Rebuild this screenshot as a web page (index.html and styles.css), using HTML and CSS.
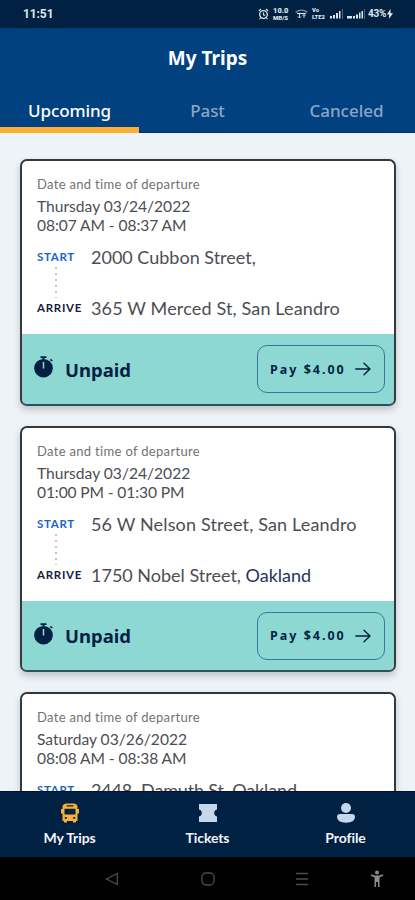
FILE: index.html
```html
<!DOCTYPE html>
<html lang="en">
<head>
<meta charset="utf-8">
<title>My Trips</title>
<link rel="stylesheet" href="styles.css">
</head>
<body>
<svg width="0" height="0" class="defs">
  <symbol id="stopwatch" viewBox="0 0 20 22">
    <path d="M6.5 0.3h6v1.600h-6zM8.500 1.500h2v2h-2z"/>
    <path d="M16.800 2.800l2 1.600-1 1.200-2-1.600z"/>
    <circle cx="9.5" cy="12.2" r="9.3"/>
    <path d="M9.500 6.500v5.500" stroke="#8ed8d4" stroke-width="1.500" stroke-linecap="round"/>
  </symbol>
  <symbol id="arrow" viewBox="0 0 16 14">
    <path d="M0.8 7h14M9 1.2L15 7l-6 5.8" fill="none" stroke="currentColor" stroke-width="1.4" stroke-linecap="round" stroke-linejoin="round"/>
  </symbol>
</svg>
<div class="app">
  <div class="status">
    <span class="clock">11:51</span>
    <div class="indicators">
      <svg class="alarm" viewBox="0 0 11 12" width="11" height="12"><circle cx="5.5" cy="6.5" r="3.8" fill="none" stroke="#dfe5ec" stroke-width="1.3"/><path d="M.8 3L3 1M10.2 3L8 1M5.5 4.5v2.3l1.5.8M2.5 10L1.5 11.2M8.5 10l1 1.2" fill="none" stroke="#dfe5ec" stroke-width="1.1"/></svg>
      <span class="speed"><b>10.0</b><b>MB/S</b></span>
      <svg class="wifi" viewBox="0 0 13 10" width="13" height="10"><path d="M.5 3.2Q6.5-1 12.500 3.200" fill="none" stroke="#7f91a8" stroke-width="1.300"/><path d="M2 4.500h9" stroke="#dfe5ec" stroke-width="1.200"/><path d="M4.500 5v4M3 7.500l1.500 1.500L6 7.500M9 9V5.500M7.500 7L9 5.500 10.500 7" fill="none" stroke="#c4ced9"/></svg>
      <span class="volte"><b>Vo</b><b>LTE2</b></span>
      <svg class="sig" viewBox="0 0 13 10" width="13" height="10"><path d="M0 7h2v2.500H0zM3 6h2v3.500H3zM6 4h2v5.500H6zM9 2h1.500v7.500H9z" fill="#dfe5ec"/><path d="M12.500 0v10" stroke="#4f6682"/></svg>
      <svg class="sig2" viewBox="0 0 18 10" width="18" height="10"><path d="M0 7h5v2.500H0zM6 7h2v2.500H6zM9 5.500h2v4H9zM12 3.500h1.500v6H12zM14.500 2H16v7.500h-1.500z" fill="#dfe5ec"/><path d="M17.500 0v10" stroke="#4f6682"/></svg>
      <span class="battery">43%</span>
      <svg class="bolt" viewBox="0 0 6 10" width="6" height="10"><path d="M3.500 0L0 5.500h2.300L1.800 10 6 4.200H3.500z" fill="#e8edf2"/></svg>
    </div>
  </div>
  <header>
    <h1>My Trips</h1>
    <nav class="tabs">
      <a class="tab active">Upcoming</a>
      <a class="tab">Past</a>
      <a class="tab canceled">Canceled</a>
    </nav>
  </header>
  <main>
    <article class="card">
      <div class="info">
        <p class="label">Date and time of departure</p>
        <p class="date">Thursday 03/24/2022</p>
        <p class="date time">08:07 AM - 08:37 AM</p>
        <div class="route">
          <span class="start">START</span><span class="place">2000 Cubbon Street,</span>
          <i class="dots"></i>
          <span class="arrive">ARRIVE</span><span class="place wide">365 W Merced St, San Leandro</span>
        </div>
      </div>
      <div class="pay">
        <svg class="watch"><use href="#stopwatch"/></svg>
        <span class="unpaid">Unpaid</span>
        <button>Pay $4.00<svg class="arr"><use href="#arrow"/></svg></button>
      </div>
    </article>
    <article class="card">
      <div class="info">
        <p class="label">Date and time of departure</p>
        <p class="date">Thursday 03/24/2022</p>
        <p class="date time pm">01:00 PM - 01:30 PM</p>
        <div class="route">
          <span class="start">START</span><span class="place wide">56 W Nelson Street, San Leandro</span>
          <i class="dots"></i>
          <span class="arrive">ARRIVE</span><span class="place">1750 Nobel Street, <em>Oakland</em></span>
        </div>
      </div>
      <div class="pay">
        <svg class="watch"><use href="#stopwatch"/></svg>
        <span class="unpaid">Unpaid</span>
        <button>Pay $4.00<svg class="arr"><use href="#arrow"/></svg></button>
      </div>
    </article>
    <article class="card">
      <div class="info">
        <p class="label">Date and time of departure</p>
        <p class="date">Saturday 03/26/2022</p>
        <p class="date time">08:08 AM - 08:38 AM</p>
        <div class="route">
          <span class="start">START</span><span class="place tight">2448&nbsp; Damuth St, Oakland</span>
          <i class="dots"></i>
        </div>
      </div>
    </article>
  </main>
  <nav class="bottom">
    <a>
      <svg viewBox="0 0 18 20" width="18" height="20"><path fill="#f7b03b" fill-rule="evenodd" d="M5 .5h8Q16.500 1 16.500 4v2H18v4.500h-1.500V18H15v1.500h-3V18H6v1.500H3V18H1.500v-7.500H0V6h1.500V4Q1.500 1 5 .5zM5.500 2.300v1.200h7V2.300zM3.500 5.800v5.700h11V5.800zM3.800 14v1.800h2V14zM12.200 14v1.800h2V14z"/></svg>
      <span>My Trips</span>
    </a>
    <a>
      <svg viewBox="0 0 20 20" width="20" height="20"><path fill="#c5d7ed" d="M1 1h18v5.500q-2.800.7-2.800 3.500t2.800 3.500V19H1v-5.500q2.800-.7 2.800-3.500T1 6.500z"/></svg>
      <span>Tickets</span>
    </a>
    <a>
      <svg viewBox="0 0 18 20" width="18" height="20"><circle cx="9" cy="5" r="5" fill="#c5d7ed"/><path fill="#c5d7ed" d="M3 11h12q3 0 3 3 0 5.700-9 5.700T0 14q0-3 3-3z"/></svg>
      <span>Profile</span>
    </a>
  </nav>
  <div class="system">
    <svg viewBox="0 0 14 14" width="14" height="14"><path d="M12.300 1.500v11L1.500 7z" fill="none" stroke="#4c4c4c" stroke-width="1.300"/></svg>
    <svg viewBox="0 0 14 14" width="14" height="14"><rect x="1" y="1" width="12" height="12" rx="4" fill="none" stroke="#4c4c4c" stroke-width="1.300"/></svg>
    <svg viewBox="0 0 14 14" width="14" height="14"><path d="M1 1.500h12M1 7h12M1 12.500h12" stroke="#4c4c4c" stroke-width="1.500"/></svg>
    <svg viewBox="0 0 14 18" width="14" height="18"><circle cx="7" cy="2.500" r="2" fill="#8a8a8a"/><path d="M1 5l4 1.500h4L13 5M7 6v5" fill="none" stroke="#8a8a8a" stroke-width="1.800"/><path d="M4.500 6h5v11H8v-5H6v5H4.500z" fill="#8a8a8a"/></svg>
  </div>
</div>
</body>
</html>
```

FILE: styles.css
```css
* { box-sizing: border-box; margin: 0; padding: 0; }
body { font-family: Lato, "Liberation Sans", sans-serif; background: #eef3f7; font-variant-ligatures: none; }
.defs { display: block; height: 0; }
.app { width: 415px; height: 900px; display: flex; flex-direction: column; overflow: hidden; }
svg { flex: none; }

.status { height: 28px; flex: none; background: #002142; color: #dfe5ec; display: flex; justify-content: space-between; align-items: center; padding: 0 22px 0 23px; }
.clock { font: 700 12px Roboto, sans-serif; letter-spacing: -0.1px; }
.indicators { display: flex; align-items: center; }
.speed, .volte { display: flex; flex-direction: column; font: 700 6px/7px Roboto, sans-serif; white-space: nowrap; }
.speed { width: 16px; margin-left: 4px; }
.speed b:first-child { font-size: 7.500px; }
.wifi { margin-left: 6px; }
.volte { width: 14px; margin-left: 4px; font-size: 5.800px; }
.sig { margin-left: 4px; }
.sig2 { margin-left: 4px; }
.battery { font: 700 10px/12px Roboto, sans-serif; letter-spacing: -0.300px; margin-left: 3px; }
.bolt { margin-left: 1px; }

header { height: 105px; flex: none; background: #01417f; display: flex; flex-direction: column; }
h1 { font: 700 19px/60px "Noto Sans", sans-serif; color: #fff; text-align: center; }
.tabs { display: grid; grid-template-columns: 139px 137px 139px; height: 45px; }
.tab { font: 500 17px/46px "Noto Sans", sans-serif; letter-spacing: -0.100px; text-align: center; color: #8ba6c6; border-bottom: 1px solid #01306f; height: 45px; }
.tab.active { color: #fff; border-bottom: 6px solid #fdae35; }
.tab.canceled { letter-spacing: 0; padding-left: 2px; }

main { flex: 1; min-height: 0; overflow: hidden; padding: 26px 19px 0 20px; display: flex; flex-direction: column; gap: 20px; }
.card { height: 246.500px; flex: none; background: #fff; border: 2px solid #35393d; border-bottom-color: #2c5457; border-radius: 7px; box-shadow: 0 4px 7px rgba(40, 50, 60, .24); overflow: hidden; display: flex; flex-direction: column; }
.info { height: 173px; flex: none; padding: 15px 15px 0; color: #4c4e53; }
.label { font-size: 13px; line-height: 16px; letter-spacing: 0.320px; color: #707276; }
.date { font-size: 15.600px; line-height: 19px; margin-top: 5px; }
.date.time { margin-top: 0; letter-spacing: -0.080px; }
.date.pm { letter-spacing: -0.120px; }
.route { margin-top: 11px; display: grid; grid-template-columns: 54px 1fr; grid-template-rows: 22px 29px 22px; align-items: center; white-space: nowrap; }
.start, .arrive { font: 700 11.500px/22px Lato, sans-serif; letter-spacing: 0.700px; }
.start { color: #1b63cb; }
.arrive { color: #17213f; }
.place { font-size: 18px; line-height: 22px; }
.place.wide { letter-spacing: 0.150px; }
.place.tight { letter-spacing: -0.150px; }
.place em { font-style: normal; color: #26345a; }
.dots { grid-column: 1 / 3; width: 2px; height: 31px; margin-left: 18px; background: linear-gradient(#c4c7cb 2px, transparent 2px) 0 0 / 2px 6px; }

.pay { flex: 1; background: #8ed8d4; display: flex; align-items: center; padding: 1px 9px 0 12px; color: #031f42; }
.watch { width: 20px; height: 22px; fill: #031f42; margin-top: -4px; }
.unpaid { font: 700 18.500px/24px "Noto Sans", sans-serif; margin: 1px 0 0 11px; }
button { margin-left: auto; width: 128px; height: 48px; border: 1px solid #34799b; border-radius: 10px; background: none; color: #031f42; font: 700 12.500px "Noto Sans", sans-serif; letter-spacing: 2px; display: flex; align-items: center; padding: 0 13px 0 12px; justify-content: space-between; }
.arr { width: 16px; height: 14px; }

.bottom { height: 66px; flex: none; background: #002142; border-top: 1px solid #001232; display: grid; grid-template-columns: 139px 137px 139px; }
.bottom a { display: flex; flex-direction: column; align-items: center; padding-top: 11px; color: #f0f4f8; font-size: 14px; font-weight: 700; line-height: 20px; gap: 5px; letter-spacing: -0.100px; }
.system { height: 43px; flex: none; background: #000; display: flex; align-items: center; padding: 0 31px 0 105px; justify-content: space-between; }
.system svg:nth-child(3) { margin-right: -21px; }
.system svg:nth-child(2) { margin-right: -1px; }
```
